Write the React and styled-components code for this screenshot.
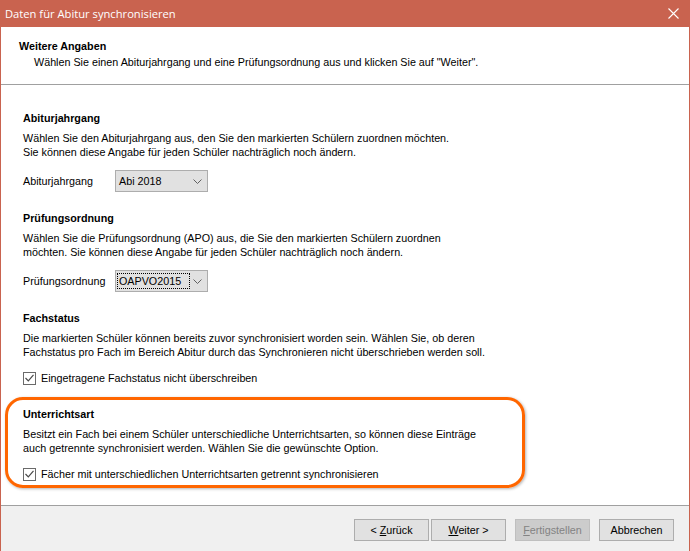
import React from "react";
import styled, { createGlobalStyle } from "styled-components";

const GlobalStyle = createGlobalStyle`
  html, body { margin: 0; padding: 0; background: #ffffff; }
  body { font-family: "Liberation Sans", Arial, sans-serif; font-size: 10.75px; color: #000; }
  * { box-sizing: border-box; }
`;

const Window = styled.div`
  width: 690px;
  height: 551px;
  display: flex;
  flex-direction: column;
  border-left: 1px solid #c9634f;
  border-right: 1px solid #c9634f;
  overflow: hidden;
  background: #fff;
`;

const TitleBar = styled.div`
  height: 27px;
  flex: none;
  background: #c9634f;
  display: flex;
  align-items: center;
  justify-content: space-between;
  padding: 0 11px 0 5px;
  margin: 0 -1px;
`;

const Title = styled.div`
  font-family: "Open Sans", "Noto Sans", sans-serif;
  font-size: 11.2px;
  color: #ffffff;
  line-height: 16px;
`;

const CloseIcon = styled.svg`
  width: 11px;
  height: 11px;
  display: block;
`;

const Header = styled.div`
  flex: none;
  height: 58px;
  border-bottom: 1px solid #a0a0a0;
  padding: 12px 0 0 18px;
`;

const HeaderTitle = styled.div`
  font-weight: bold;
  line-height: 14px;
`;

const HeaderSub = styled.div`
  margin-top: 2px;
  padding-left: 15px;
  line-height: 14px;
`;

const Content = styled.div`
  flex: 1;
  padding: 26px 0 0 22px;
  border-bottom: 1px solid #a0a0a0;
  display: flex;
  flex-direction: column;
  align-items: flex-start;
`;

const Section = styled.section`
  & + & { margin-top: 19px; }
`;

const Heading = styled.div`
  font-weight: bold;
  line-height: 14px;
`;

const Para = styled.div`
  margin-top: 6px;
  line-height: 14px;
`;

const FieldRow = styled.div`
  margin-top: 11px;
  display: flex;
  align-items: center;
`;

const Label = styled.div`
  width: 92px;
  line-height: 14px;
`;

const Combo = styled.div`
  width: 93px;
  height: 22px;
  background: #e1e1e1;
  border: 1px solid #adadad;
  display: flex;
  align-items: center;
  justify-content: space-between;
  padding: 0 5px 0 1px;
`;

const ComboText = styled.span`
  line-height: 14px;
  padding: 0 1px;
  width: 73px;
  border: 1px dotted ${(p) => (p.$focused ? "#000" : "transparent")};
`;

const Chevron = styled.svg`
  width: 9px;
  height: 5px;
  display: block;
`;

const CheckRow = styled.label`
  margin-top: 12px;
  display: flex;
  align-items: center;
  line-height: 14px;
  gap: 5px;
`;

const CheckBox = styled.span`
  width: 13px;
  height: 13px;
  border: 1px solid #6a6a6a;
  background: #fff;
  display: flex;
  align-items: center;
  justify-content: center;
`;

const Highlight = styled.div`
  margin-top: 12px;
  margin-left: -18px;
  width: 520px;
  border: 3px solid #ff6600;
  border-radius: 18px;
  padding: 7px 0 4px 15px;
  box-shadow: 1px 1px 3px rgba(0, 0, 0, 0.3);
`;

const ButtonBar = styled.div`
  flex: none;
  height: 45px;
  background: #f0f0f0;
  display: flex;
  justify-content: flex-end;
  align-items: flex-start;
  padding: 13px 15px 0 0;
`;

const Button = styled.button`
  width: 75px;
  height: 22px;
  margin-left: ${(p) => p.$gap}px;
  font-family: "Liberation Sans", Arial, sans-serif;
  font-size: 10.75px;
  background: ${(p) => (p.disabled ? "#cccccc" : "#e1e1e1")};
  border: 1px solid ${(p) => (p.disabled ? "#bfbfbf" : "#adadad")};
  color: ${(p) => (p.disabled ? "#838383" : "#000")};
  padding: 0;
  border-radius: 0;
`;

const ChevronIcon = () => (
  <Chevron viewBox="0 0 9 5">
    <path d="M0.5 0.5 L4.5 4.5 L8.5 0.5" fill="none" stroke="#606060" strokeWidth="1" />
  </Chevron>
);

const Check = () => (
  <svg width="9" height="8" viewBox="0 0 9 8" style={{ display: "block" }}>
    <path d="M0.5 4 L3.3 6.8 L8.5 0.8" fill="none" stroke="#4a4a4a" strokeWidth="1.2" />
  </svg>
);

export default function App() {
  return (
    <>
      <GlobalStyle />
      <Window>
        <TitleBar>
          <Title>Daten für Abitur synchronisieren</Title>
          <CloseIcon viewBox="0 0 11 11">
            <path d="M0.5 0.5 L10.5 10.5 M10.5 0.5 L0.5 10.5" stroke="#ffffff" strokeWidth="1.1" />
          </CloseIcon>
        </TitleBar>
        <Header>
          <HeaderTitle>Weitere Angaben</HeaderTitle>
          <HeaderSub>
            Wählen Sie einen Abiturjahrgang und eine Prüfungsordnung aus und klicken Sie auf "Weiter".
          </HeaderSub>
        </Header>
        <Content>
          <Section>
            <Heading>Abiturjahrgang</Heading>
            <Para>
              Wählen Sie den Abiturjahrgang aus, den Sie den markierten Schülern zuordnen möchten.
              <br />
              Sie können diese Angabe für jeden Schüler nachträglich noch ändern.
            </Para>
            <FieldRow>
              <Label>Abiturjahrgang</Label>
              <Combo>
                <ComboText>Abi 2018</ComboText>
                <ChevronIcon />
              </Combo>
            </FieldRow>
          </Section>
          <Section>
            <Heading>Prüfungsordnung</Heading>
            <Para>
              Wählen Sie die Prüfungsordnung (APO) aus, die Sie den markierten Schülern zuordnen
              <br />
              möchten. Sie können diese Angabe für jeden Schüler nachträglich noch ändern.
            </Para>
            <FieldRow>
              <Label>Prüfungsordnung</Label>
              <Combo>
                <ComboText $focused>OAPVO2015</ComboText>
                <ChevronIcon />
              </Combo>
            </FieldRow>
          </Section>
          <Section>
            <Heading>Fachstatus</Heading>
            <Para>
              Die markierten Schüler können bereits zuvor synchronisiert worden sein. Wählen Sie, ob deren
              <br />
              Fachstatus pro Fach im Bereich Abitur durch das Synchronieren nicht überschrieben werden soll.
            </Para>
            <CheckRow>
              <CheckBox>
                <Check />
              </CheckBox>
              Eingetragene Fachstatus nicht überschreiben
            </CheckRow>
          </Section>
          <Highlight>
            <Section>
              <Heading>Unterrichtsart</Heading>
              <Para>
                Besitzt ein Fach bei einem Schüler unterschiedliche Unterrichtsarten, so können diese Einträge
                <br />
                auch getrennte synchronisiert werden. Wählen Sie die gewünschte Option.
              </Para>
              <CheckRow>
                <CheckBox>
                  <Check />
                </CheckBox>
                Fächer mit unterschiedlichen Unterrichtsarten getrennt synchronisieren
              </CheckRow>
            </Section>
          </Highlight>
        </Content>
        <ButtonBar>
          <Button $gap={0}>
            &lt; <u>Z</u>urück
          </Button>
          <Button $gap={2}>
            <u>W</u>eiter &gt;
          </Button>
          <Button $gap={9} disabled>
            <u>F</u>ertigstellen
          </Button>
          <Button $gap={9}>Abbrechen</Button>
        </ButtonBar>
      </Window>
    </>
  );
}
